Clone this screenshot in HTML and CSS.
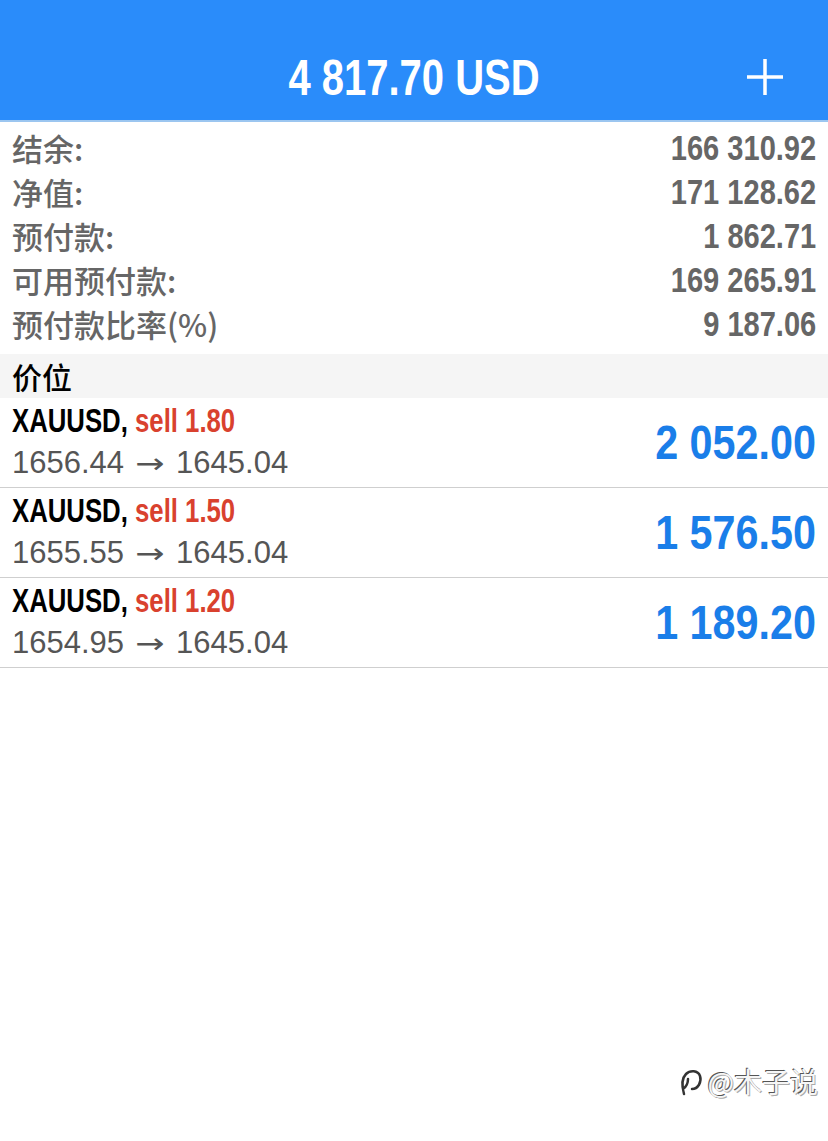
FILE: index.html
```html
<!DOCTYPE html>
<html lang="zh">
<head>
<meta charset="utf-8">
<link rel="stylesheet" href="styles.css">
</head>
<body>
<div class="app">
  <header class="topbar">
    <div class="title">4 817.70 USD</div>
    <svg class="plus" width="38" height="38" viewBox="0 0 38 38"><path d="M19 1V37M1 19H37" stroke="#fff" stroke-width="3.5"/></svg>
  </header>
  <section class="summary">
    <div class="srow"><span class="lbl">结余:</span><span class="val">166 310.92</span></div>
    <div class="srow"><span class="lbl">净值:</span><span class="val">171 128.62</span></div>
    <div class="srow"><span class="lbl">预付款:</span><span class="val">1 862.71</span></div>
    <div class="srow"><span class="lbl">可用预付款:</span><span class="val">169 265.91</span></div>
    <div class="srow"><span class="lbl">预付款比率(%)</span><span class="val">9 187.06</span></div>
  </section>
  <div class="sechead">价位</div>
  <ul class="trades">
    <li class="trade">
      <div class="tinfo">
        <div class="tsym">XAUUSD, <span class="sell">sell 1.80</span></div>
        <div class="tprice">1656.44<span class="arrow">→</span>1645.04</div>
      </div>
      <div class="tpl">2 052.00</div>
    </li>
    <li class="trade">
      <div class="tinfo">
        <div class="tsym">XAUUSD, <span class="sell">sell 1.50</span></div>
        <div class="tprice">1655.55<span class="arrow">→</span>1645.04</div>
      </div>
      <div class="tpl">1 576.50</div>
    </li>
    <li class="trade">
      <div class="tinfo">
        <div class="tsym">XAUUSD, <span class="sell">sell 1.20</span></div>
        <div class="tprice">1654.95<span class="arrow">→</span>1645.04</div>
      </div>
      <div class="tpl">1 189.20</div>
    </li>
  </ul>
  <div class="spacer"></div>
  <div class="watermark">
    <svg class="wm-logo" width="26" height="30" viewBox="0 0 26 30"><path d="M6 28C4 21 3 13 8 8C12 4 20 4 22 10C24 16 20 23 14 23M10 13C10 17 8 21 5 23" fill="none" stroke="#333" stroke-width="2.5" stroke-linecap="round"/></svg>
    <span class="wm-text">@木子说</span>
  </div>
</div>
</body>
</html>
```
FILE: styles.css
```css
html, body {
  margin: 0;
  padding: 0;
  background: #fff;
}
.app {
  width: 828px;
  height: 1141px;
  display: flex;
  flex-direction: column;
  font-family: "Liberation Sans", "Noto Sans CJK SC", sans-serif;
}
.topbar {
  background: #2a8cfa;
  border-bottom: 2px solid #9cc6f0;
  position: relative;
  display: flex;
  align-items: flex-end;
  justify-content: center;
  padding-bottom: 14px;
  height: 106px;
}
.title {
  color: #fff;
  font-weight: bold;
  font-size: 50px;
  line-height: 56px;
  transform: scaleX(0.8);
  transform-origin: center;
}
.plus {
  position: absolute;
  right: 44px;
  top: 58px;
}
.summary {
  display: flex;
  flex-direction: column;
  padding: 4px 12px 8px 12px;
}
.srow {
  display: flex;
  justify-content: space-between;
  align-items: center;
  height: 44px;
}
.lbl {
  color: #666;
  font-family: "Noto Sans CJK SC", sans-serif;
  font-weight: 500;
  font-size: 31px;
  line-height: 44px;
}
.val {
  color: #666;
  font-weight: bold;
  font-size: 35px;
  line-height: 44px;
  transform: scaleX(0.83);
  transform-origin: right center;
}
.sechead {
  background: #f5f5f5;
  height: 44px;
  line-height: 44px;
  padding-left: 12px;
  font-family: "Noto Sans CJK SC", sans-serif;
  font-weight: 500;
  font-size: 30px;
  color: #000;
}
.trades {
  list-style: none;
  margin: 0;
  padding: 0;
}
.trade {
  height: 89px;
  border-bottom: 1px solid #cfcfcf;
  display: flex;
  align-items: center;
  justify-content: space-between;
  padding: 0 12px;
}
.tinfo {
  display: flex;
  flex-direction: column;
}
.tsym {
  font-weight: bold;
  font-size: 33px;
  line-height: 42px;
  color: #000;
  transform: scaleX(0.78);
  transform-origin: left center;
  white-space: nowrap;
}
.sell {
  color: #d9412e;
}
.tprice {
  font-size: 31px;
  line-height: 42px;
  color: #555;
  white-space: nowrap;
}
.arrow {
  font-family: "DejaVu Sans", sans-serif;
  font-size: 28px;
  display: inline-block;
  width: 52px;
  text-align: center;
  transform: scaleX(1.25);
}
.tpl {
  font-weight: bold;
  font-size: 48px;
  color: #1a7ee9;
  transform: scaleX(0.86);
  transform-origin: right center;
}
.spacer {
  flex: 1;
}
.watermark {
  display: flex;
  align-items: center;
  justify-content: flex-end;
  gap: 4px;
  padding: 0 10px 40px 0;
}
.wm-text {
  font-family: "Noto Sans CJK SC", sans-serif;
  font-size: 28px;
  color: #f6f6f6;
  text-shadow: -1px -1px 0 #555, 1px 1px 0 #aaa;
}
```
